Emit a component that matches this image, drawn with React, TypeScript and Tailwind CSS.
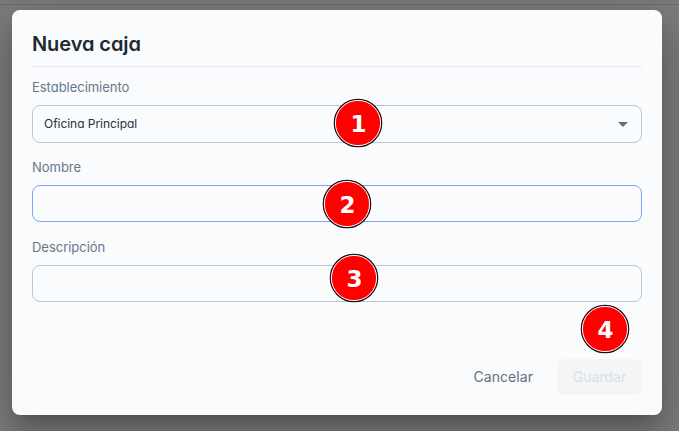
import type { ReactNode } from "react";

function Marker({ n, place }: { n: number; place: string }) {
  return (
    <span className={`absolute size-12 ${place}`}>
      <svg className="absolute inset-0 size-full overflow-visible" viewBox="0 0 48 48">
        <circle cx="24" cy="24" r="23.7" fill="#ff0000" stroke="#111" strokeWidth="1.2" />
        <circle cx="24" cy="24" r="22.6" fill="none" stroke="#fff" strokeWidth="1" />
      </svg>
      <span className="absolute inset-0 flex items-center justify-center pt-[3px] pl-px font-['DejaVu_Sans',sans-serif] text-[23px] leading-none font-bold tracking-normal text-white">
        {n}
      </span>
    </span>
  );
}

function Field({ label, box, children }: { label: string; box: string; children?: ReactNode }) {
  return (
    <div>
      <div className="mb-[9px] h-[18px] text-[13px] leading-[18px] tracking-[-0.03px] text-[#66788a]">{label}</div>
      <div className={`relative flex items-center rounded-lg border pr-[13px] pl-[11px] ${box}`}>{children}</div>
    </div>
  );
}

export default function App() {
  return (
    <div className="h-[431px] w-[679px] overflow-hidden bg-[#7c7c7d] font-['Inter',sans-serif]">
      <div className="h-[5px] border-b border-[#6c6c6d] bg-[#7b7b7b]" />
      <div className="mt-[5px] ml-3 flex h-[405px] w-[650px] flex-col rounded-lg bg-[#f9fbfd] px-5 shadow-[0_11px_15px_-7px_rgba(0,0,0,.2),0_24px_38px_3px_rgba(0,0,0,.14),0_9px_46px_8px_rgba(0,0,0,.12)] [font-feature-settings:'cv11']">
        <h1 className="h-[57px] border-b border-[#e4e8ec] pt-5 text-xl leading-7 font-semibold tracking-[-0.07px] text-[#1f2933]">
          Nueva caja
        </h1>
        <div className="mt-[11px] flex flex-col">
          <Field label="Establecimiento" box="h-[38px] border-[#bac7d3]">
            <span className="text-xs tracking-[-0.04px] text-[#27313b]">Oficina Principal</span>
            <span className="ml-auto border-x-5 border-t-5 border-x-transparent border-t-[#617182]" />
            <Marker n={1} place="left-[301px] -top-[7px]" />
          </Field>
          <div className="mt-[15px]">
            <Field label="Nombre" box="h-[37px] border-[#7ba4f8]">
              <Marker n={2} place="left-[290px] -top-[6px]" />
            </Field>
          </div>
          <div className="mt-4">
            <Field label="Descripción" box="h-[37px] border-[#bac7d3]">
              <Marker n={3} place="left-[297px] -top-[12px]" />
            </Field>
          </div>
        </div>
        <div className="mt-[57px] flex justify-end gap-2 text-sm font-normal tracking-[0.06px] [font-feature-settings:normal]">
          <button className="h-9 px-4 text-[#5f7183]">Cancelar</button>
          <button disabled className="relative h-9 w-[85px] rounded-md bg-[#f3f5f7] text-[#dbe0e6]">
            Guardar
            <Marker n={4} place="left-6 -top-[54px]" />
          </button>
        </div>
      </div>
    </div>
  );
}
